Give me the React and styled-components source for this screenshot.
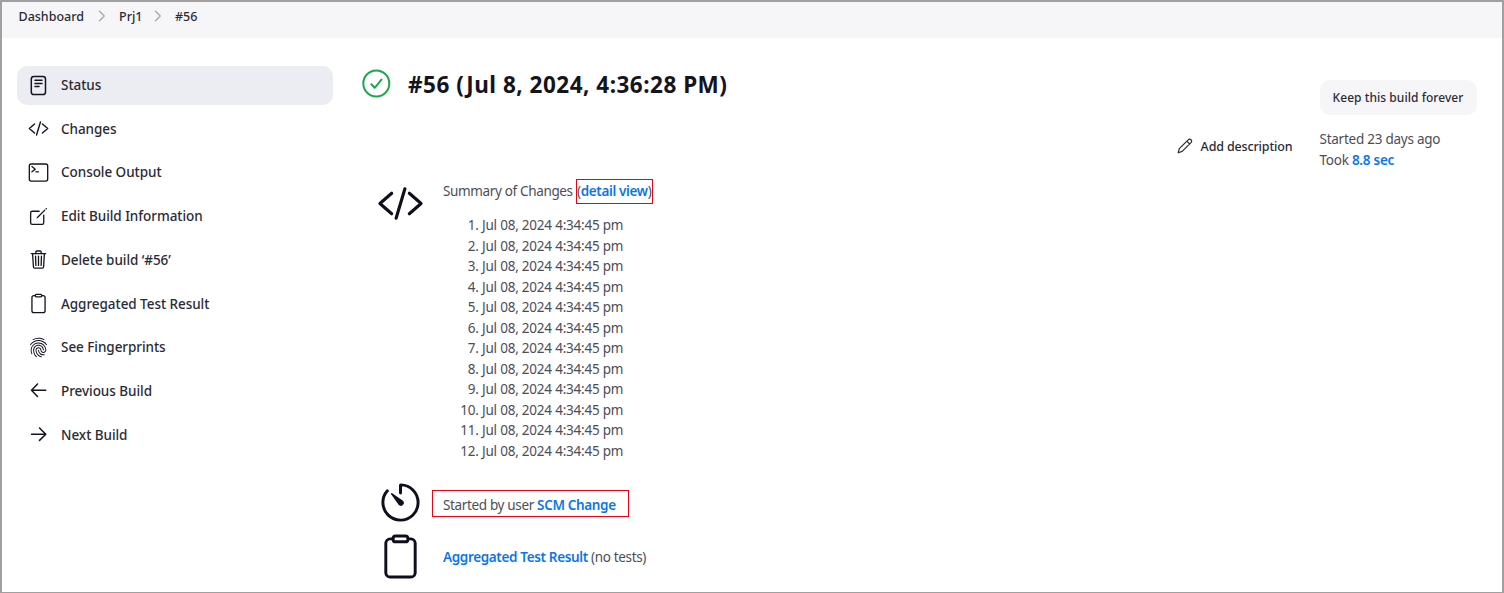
import React from "react";
import styled, { createGlobalStyle } from "styled-components";
import {
  IoTrashOutline,
  IoCreateOutline,
  IoTerminalOutline,
  IoFingerPrintOutline,
  IoTimerOutline,
  IoClipboardOutline,
} from "react-icons/io5";

const Global = createGlobalStyle`
  * { box-sizing: border-box; }
  body {
    margin: 0;
    background: #fff;
    color: #14141f;
    font-family: "Noto Sans", "Open Sans", sans-serif;
  }
`;

const Page = styled.div`
  width: 1504px;
  height: 593px;
  overflow: hidden;
  border: 2px solid #a0a0a0;
  border-bottom-width: 1px;
`;

const Breadcrumbs = styled.nav`
  display: flex;
  align-items: flex-start;
  height: 36px;
  padding: 4px 0 0 16.5px;
  background: #f6f6f8;
  font-size: 12.5px;
  font-weight: 500;
  line-height: 21px;
  letter-spacing: 0;
  color: #2b2b36;
`;

const Crumb = styled.span`
  width: ${(p) => p.$w}px;
  white-space: nowrap;
`;

const Chevron = styled.svg`
  width: 8px;
  height: 12px;
  margin: 4px 13px 0 14px;
  fill: none;
  stroke: #a9a9b6;
  stroke-width: 1.4;
  stroke-linecap: round;
  stroke-linejoin: round;
`;

const Body = styled.div`
  display: flex;
  align-items: flex-start;
`;

const Sidebar = styled.aside`
  display: flex;
  flex-direction: column;
  gap: 4.7px;
  width: 316px;
  margin: 27.6px 29px 0 15px;
`;

const Task = styled.a`
  display: flex;
  align-items: center;
  height: 39px;
  padding-left: 11px;
  border-radius: 10px;
  background: ${(p) => (p.$active ? "#ecedf3" : "transparent")};
  color: #2b2b36;
  font-size: 13.5px;
  font-weight: 500;
  letter-spacing: -0.05px;
  white-space: nowrap;

  svg {
    flex: none;
    width: 21px;
    height: 21px;
    margin-right: 12px;
    color: #14141f;
  }
`;

const Main = styled.main`
  flex: 1;
  padding: 28px 25.5px 0 0;
`;

const Header = styled.header`
  display: flex;
  justify-content: space-between;
  height: 105px;
`;

const Heading = styled.h1`
  display: flex;
  align-items: center;
  gap: 17px;
  height: 37px;
  margin: 0;
  font-size: 22.5px;
  font-weight: 700;
  letter-spacing: 0.5px;
  white-space: nowrap;

  svg {
    width: 29px;
    height: 29px;
    margin-top: -3px;
  }
`;

const Aside = styled.div`
  display: flex;
  align-items: flex-start;
  padding-top: 14px;
`;

const AddDescription = styled.a`
  display: flex;
  align-items: center;
  gap: 8px;
  height: 20px;
  margin: 56px 27px 0 0;
  color: #2b2b36;
  font-size: 12.5px;
  font-weight: 500;
  letter-spacing: -0.15px;
  white-space: nowrap;
`;

const BuildInfo = styled.div`
  width: 157px;
  color: #4d4d58;
  font-size: 13.5px;
  line-height: 20.5px;
  letter-spacing: -0.25px;
  white-space: nowrap;
`;

const KeepButton = styled.button`
  width: 157px;
  height: 35px;
  margin: 0 0 14px;
  padding: 0;
  border: 0;
  border-radius: 10px;
  background: #f6f6f8;
  color: #2b2b36;
  font: 500 12px "Noto Sans", sans-serif;
  letter-spacing: 0.05px;
  display: block;
`;

const Summary = styled.section`
  display: grid;
  grid-template-columns: 79px auto;
  padding-left: 2px;
  color: #4d4d58;
  font-size: 13.5px;
  line-height: 20.5px;
  letter-spacing: -0.35px;
  white-space: nowrap;
`;

const IconCell = styled.div`
  padding-top: ${(p) => p.$top}px;
  padding-left: ${(p) => p.$left || 0}px;
  height: ${(p) => p.$h}px;

  svg { display: block; color: #0f0f1c; }
`;

const TextCell = styled.div`
  padding-top: ${(p) => p.$top}px;
`;

const Link = styled.a`
  color: #0b76ea;
  font-weight: 600;
`;

const Marked = styled.span`
  display: inline-block;
  width: ${(p) => p.$w}px;
  height: ${(p) => p.$h}px;
  line-height: ${(p) => p.$lh}px;
  margin: ${(p) => p.$m};
  padding-left: ${(p) => p.$pad}px;
  border: 1px solid #e30613;
`;

const Commits = styled.ol`
  margin: 11px 0 0;
  padding: 0 0 0 39px;
  letter-spacing: -0.22px;
  li { height: 20.5px; }
`;

const line = {
  fill: "none",
  stroke: "currentColor",
  strokeLinecap: "round",
  strokeLinejoin: "round",
};

const CodeIcon = ({ size, weight = 34 }) => (
  <svg viewBox="0 0 512 512" width={size} height={size} {...line} strokeWidth={weight}>
    <path d="M160 368L32 256l128-112M352 368l128-112-128-112M304 96l-96 320" />
  </svg>
);

const StatusIcon = () => (
  <svg viewBox="0 0 21 21" {...line} strokeWidth="1.5">
    <rect x="3.3" y="1.5" width="14.2" height="18" rx="2.6" />
    <path d="M7 5.3h7M7 8.5h7M7 11.6h4" />
  </svg>
);

const ArrowIcon = ({ forward }) => (
  <svg viewBox="0 0 21 21" {...line} strokeWidth="1.5">
    <path d={forward ? "M11.5 4l6.3 6.2-6.3 6.2M17.5 10.2H3.5" : "M9.5 4L3.5 10.2l6 6.2M3.7 10.2h14"} />
  </svg>
);

const PencilIcon = () => (
  <svg viewBox="0 0 16 16" width="16" height="16" {...line} strokeWidth="1.2">
    <path d="M1.2 14.8l1.1-4.1L11.2 1.8a1.85 1.85 0 0 1 2.8 0a1.85 1.85 0 0 1 0 2.8L5.2 13.4z M9.9 3.2l2.8 2.8" />
  </svg>
);

const SuccessIcon = () => (
  <svg viewBox="0 0 29 29" {...line} stroke="#1ea64b">
    <circle cx="14.3" cy="14.5" r="13" strokeWidth="2" />
    <path d="M9.4 15.2l3.3 3.6 6.8-8.2" strokeWidth="2" />
  </svg>
);

const tasks = [
  { label: "Status", icon: <StatusIcon />, active: true },
  { label: "Changes", icon: <CodeIcon size={21} /> },
  { label: "Console Output", icon: <IoTerminalOutline /> },
  { label: "Edit Build Information", icon: <IoCreateOutline /> },
  { label: "Delete build ‘#56’", icon: <IoTrashOutline /> },
  { label: "Aggregated Test Result", icon: <IoClipboardOutline /> },
  { label: "See Fingerprints", icon: <IoFingerPrintOutline /> },
  { label: "Previous Build", icon: <ArrowIcon /> },
  { label: "Next Build", icon: <ArrowIcon forward /> },
];

const Separator = () => (
  <Chevron viewBox="0 0 8 12">
    <path d="M1.5 1.2L6.3 6 1.5 10.8" />
  </Chevron>
);

export default function App() {
  return (
    <Page>
      <Global />
      <Breadcrumbs>
        <Crumb $w={65.5}>Dashboard</Crumb>
        <Separator />
        <Crumb $w={21}>Prj1</Crumb>
        <Separator />
        <Crumb>#56</Crumb>
      </Breadcrumbs>
      <Body>
        <Sidebar>
          {tasks.map((t) => (
            <Task key={t.label} $active={t.active}>
              {t.icon}
              {t.label}
            </Task>
          ))}
        </Sidebar>
        <Main>
          <Header>
            <Heading>
              <SuccessIcon />
              #56 (Jul 8, 2024, 4:36:28 PM)
            </Heading>
            <Aside>
              <AddDescription>
                <PencilIcon />
                Add description
              </AddDescription>
              <BuildInfo>
                <KeepButton>Keep this build forever</KeepButton>
                <div>Started 23 days ago</div>
                <div>
                  Took <Link>8.8 sec</Link>
                </div>
              </BuildInfo>
            </Aside>
          </Header>
          <Summary>
            <IconCell $top={8.5} $left={13} $h={305}>
              <CodeIcon size={47} />
            </IconCell>
            <TextCell $top={8}>
              Summary of Changes{" "}
              <Marked $w={77} $h={25} $lh={22} $m="0" $pad={0}>
                (<Link>detail view</Link>)
              </Marked>
              <Commits>
                {Array.from({ length: 12 }, (_, i) => (
                  <li key={i}>Jul 08, 2024 4:34:45 pm</li>
                ))}
              </Commits>
            </TextCell>
            <IconCell $top={2.5} $left={13} $h={56}>
              <IoTimerOutline size={47} />
            </IconCell>
            <TextCell $top={14}>
              <Marked $w={197} $h={27} $lh={28} $m="0 0 0 -11px" $pad={10}>
                Started by user <Link>SCM Change</Link>
              </Marked>
            </TextCell>
            <IconCell $top={1} $left={13} $h={52}>
              <IoClipboardOutline size={47} />
            </IconCell>
            <TextCell $top={15}>
              <Link>Aggregated Test Result</Link> (no tests)
            </TextCell>
          </Summary>
        </Main>
      </Body>
    </Page>
  );
}
